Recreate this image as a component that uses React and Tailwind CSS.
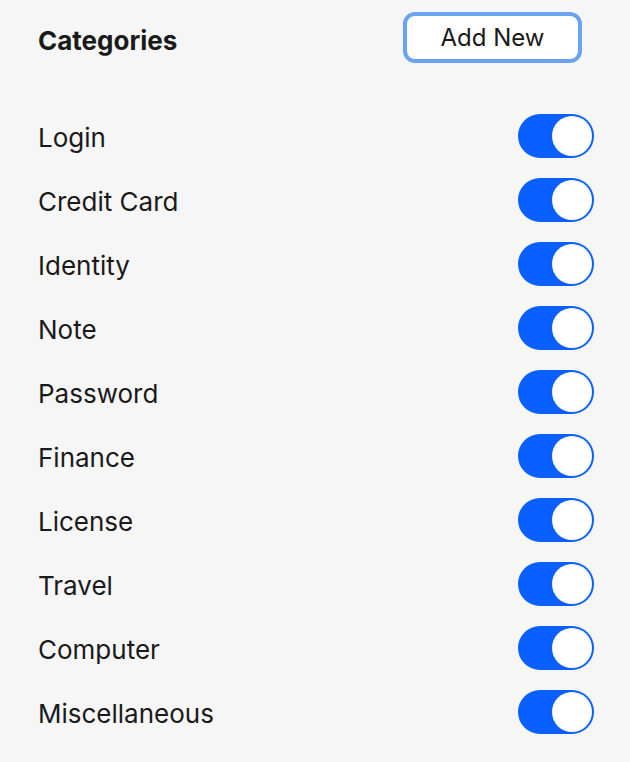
const categories = [
  "Login",
  "Credit Card",
  "Identity",
  "Note",
  "Password",
  "Finance",
  "License",
  "Travel",
  "Computer",
  "Miscellaneous",
];

function Toggle() {
  return (
    <div className="flex h-[44px] w-[76px] items-center justify-end rounded-full bg-[#0a5fff] p-[2px]">
      <div className="h-[40px] w-[40px] rounded-full bg-white" />
    </div>
  );
}

export default function App() {
  return (
    <div className="min-h-[762px] bg-[#f6f6f6] pl-[38px] pr-[36px] pt-[12px] font-['Inter',sans-serif] text-[#1a1a1a]">
      <div className="flex items-center justify-between">
        <h2 className="mt-[5px] text-[26px] font-bold">Categories</h2>
        <button className="mr-[12px] h-[51px] w-[179px] rounded-[12px] border-[4px] border-[#6aa3f0] bg-white text-[24px]">
          Add New
        </button>
      </div>
      <div className="mt-[51px] flex flex-col gap-[20px]">
        {categories.map((name) => (
          <div key={name} className="flex items-center justify-between">
            <span className="mt-[3px] text-[26px]">{name}</span>
            <Toggle />
          </div>
        ))}
      </div>
    </div>
  );
}
